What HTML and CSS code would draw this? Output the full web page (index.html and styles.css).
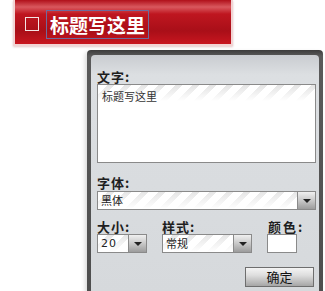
FILE: index.html
```html
<!DOCTYPE html>
<html lang="zh-CN">
<head>
  <meta charset="UTF-8">
  <title>标题编辑</title>
  <link rel="stylesheet" href="styles.css">
</head>
<body>
  <div class="banner">
    <span class="check"></span>
    <span class="title-box">标题写这里</span>
  </div>

  <div class="dialog">
    <div class="panel">
      <div class="label">文字:</div>
      <div class="text-area">标题写这里</div>

      <div class="label label-font">字体:</div>
      <div class="select select-wide">
        <span class="value">黑体</span>
        <span class="arrow"></span>
      </div>

      <div class="row">
        <div class="field field-size">
          <div class="label">大小:</div>
          <div class="select">
            <span class="value value-num">20</span>
            <span class="arrow"></span>
          </div>
        </div>
        <div class="field field-style">
          <div class="label">样式:</div>
          <div class="select">
            <span class="value">常规</span>
            <span class="arrow"></span>
          </div>
        </div>
        <div class="field field-color">
          <div class="label">颜色:</div>
          <div class="swatch"></div>
        </div>
      </div>

      <div class="actions">
        <button class="ok">确定</button>
      </div>
    </div>
  </div>
</body>
</html>
```

FILE: styles.css
```css
body {
  margin: 0;
  background: #fff;
  font-family: "Noto Sans CJK SC", "DejaVu Sans", sans-serif;
  color: #222;
}

.banner {
  margin-left: 13px;
  padding-top: 4px;
  box-sizing: border-box;
  height: 46px;
  width: 220px;
  border: 2px solid #f2d4d4;
  border-top: 0;
  background: linear-gradient(to bottom, #b0101a 0, #d9585e 7px, #bf1620 14px, #a90f18 70%, #c8161f 100%);
  display: flex;
  align-items: center;
  box-shadow: 0 1px 2px rgba(180, 120, 120, 0.4);
}

.check {
  width: 12px;
  height: 12px;
  border: 1px solid #f4e4e4;
  margin-left: 10px;
  margin-right: 7px;
}

.title-box {
  border: 1px solid #6f6a9c;
  color: #fff;
  font-weight: bold;
  font-size: 19px;
  line-height: 27px;
  padding: 0 3px;
}

.dialog {
  margin-left: 87px;
  margin-top: 4px;
  width: 236px;
  height: 241px;
  background: linear-gradient(to bottom, #3c3c3c, #5a5a5a 6px, #4e4e4e);
  border-radius: 4px 4px 0 0;
  padding: 5px 4px 0 4px;
  box-sizing: border-box;
  box-shadow: -2px 2px 4px rgba(0, 0, 0, 0.15);
}

.panel {
  background: linear-gradient(to bottom, #c9ccd0 0, #dcdfe2 20px, #d6d9dc 100%);
  border-radius: 4px 4px 0 0;
  height: 100%;
  padding: 14px 3px 0 6px;
  box-sizing: border-box;
}

.label {
  font-size: 13px;
  font-weight: bold;
  line-height: 15px;
  height: 15px;
  color: #1e1e1e;
  letter-spacing: 1px;
}

.text-area {
  border: 1px solid #8a8a8a;
  font-size: 11px;
  line-height: 14px;
  padding: 4px 4px;
  box-sizing: border-box;
  height: 79px;
  color: #333;
  background:
    linear-gradient(to bottom, rgba(255,255,255,0) 0, #fff 16px),
    repeating-linear-gradient(135deg, #fff 0, #fff 7px, #e4e4e4 7px, #e4e4e4 12px);
}

.label-font {
  margin-top: 12px;
  margin-bottom: 1px;
}

.select {
  display: flex;
  height: 19px;
  border: 1px solid #8a8a8a;
  box-sizing: border-box;
  background:
    linear-gradient(to bottom, rgba(255,255,255,0) 0, #fff 17px),
    repeating-linear-gradient(135deg, #fff 0, #fff 7px, #e6e6e6 7px, #e6e6e6 12px);
}

.select .value {
  flex: 1;
  font-size: 11px;
  line-height: 17px;
  padding-left: 3px;
  color: #222;
}

.select .value-num {
  font-family: "DejaVu Sans", sans-serif;
  font-size: 11px;
  letter-spacing: 1px;
}

.arrow {
  width: 17px;
  border-left: 1px solid #8a8a8a;
  background: linear-gradient(to bottom, #f0f0f0 0, #c8c8c8 50%, #9c9c9c 100%);
  position: relative;
}

.arrow::after {
  content: "";
  position: absolute;
  left: 5px;
  top: 7px;
  border-left: 4px solid transparent;
  border-right: 4px solid transparent;
  border-top: 4px solid #222;
}

.row {
  display: flex;
  margin-top: 9px;
}

.field-size {
  width: 50px;
}

.field-style {
  width: 90px;
  margin-left: 15px;
}

.field-color {
  margin-left: 15px;
}

.field-color .label {
  margin-left: 1px;
  letter-spacing: 2px;
}

.swatch {
  width: 30px;
  height: 19px;
  border: 1px solid #8a8a8a;
  background: #fff;
  box-sizing: border-box;
}

.actions {
  display: flex;
  justify-content: flex-end;
  margin-top: 14px;
  padding-right: 2px;
}

.ok {
  width: 69px;
  height: 20px;
  border: 1px solid #6e6e6e;
  background: linear-gradient(to bottom, #f4f4f4 0, #dedede 40%, #a6a6a6 100%);
  font-family: "Noto Sans CJK SC", sans-serif;
  font-size: 13px;
  line-height: 16px;
  padding: 0;
  color: #111;
}
```
